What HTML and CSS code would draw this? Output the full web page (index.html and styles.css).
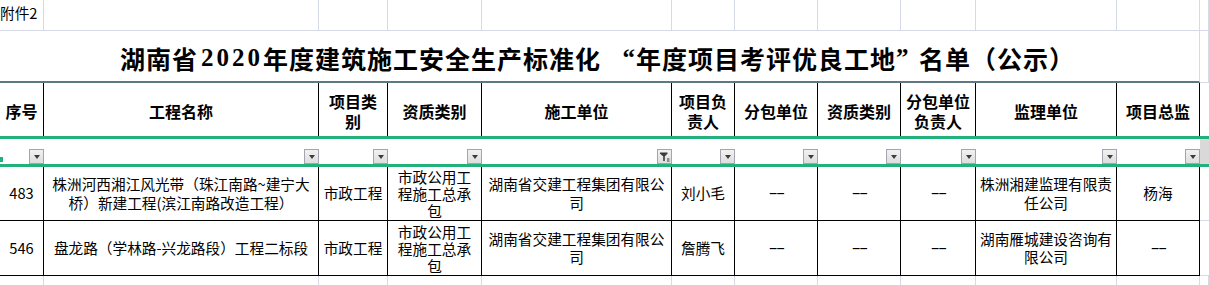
FILE: index.html
```html
<!DOCTYPE html>
<html lang="zh-CN">
<head>
<meta charset="utf-8">
<title>名单（公示）</title>
<link rel="stylesheet" href="styles.css">
</head>
<body>
<div class="sheet">
  <div class="row r-top">
    <div class="c attach">附件2</div>
    <div class="c"></div><div class="c"></div><div class="c"></div><div class="c"></div><div class="c"></div>
    <div class="c"></div><div class="c"></div><div class="c"></div><div class="c"></div><div class="c"></div><div class="c"></div>
  </div>
  <div class="row r-title">
    <div class="c title">湖南省<span class="num">2020</span>年度建筑施工安全生产标准化<span class="sp"></span><span class="ql">“</span>年度项目考评优良工地<span class="qr">”</span>名单（公示）</div>
    <div class="c"></div>
  </div>
  <div class="row r-head">
    <div class="c">序号</div>
    <div class="c">工程名称</div>
    <div class="c">项目类<br>别</div>
    <div class="c">资质类别</div>
    <div class="c">施工单位</div>
    <div class="c">项目负<br>责人</div>
    <div class="c">分包单位</div>
    <div class="c">资质类别</div>
    <div class="c">分包单位<br>负责人</div>
    <div class="c">监理单位</div>
    <div class="c">项目总监</div>
    <div class="c end"></div>
  </div>
  <div class="row r-filter">
    <div class="c"><span class="fb dd"></span></div>
    <div class="c"><span class="fb dd"></span></div>
    <div class="c"><span class="fb dd"></span></div>
    <div class="c"><span class="fb dd"></span></div>
    <div class="c"><span class="fb"><svg width="13" height="13" viewBox="0 0 13 13"><path d="M2 2.5h7.5v1.2L6.8 6.2V11H5.2V6.2L2 3.7z" fill="#3a3a3a"/><rect x="9" y="8.5" width="2.5" height="1" fill="#3a3a3a"/><rect x="9" y="10.5" width="2.5" height="1" fill="#3a3a3a"/></svg></span></div>
    <div class="c"><span class="fb dd"></span></div>
    <div class="c"><span class="fb dd"></span></div>
    <div class="c"><span class="fb dd"></span></div>
    <div class="c"><span class="fb dd"></span></div>
    <div class="c"><span class="fb dd"></span></div>
    <div class="c"><span class="fb dd"></span></div>
    <div class="c end"></div>
  </div>
  <div class="row r-data r1">
    <div class="c">483</div>
    <div class="c">株洲河西湘江风光带（珠江南路~建宁大<br>桥）新建工程(滨江南路改造工程）</div>
    <div class="c">市政工程</div>
    <div class="c three">市政公用工<br>程施工总承<br>包</div>
    <div class="c">湖南省交建工程集团有限公<br>司</div>
    <div class="c">刘小毛</div>
    <div class="c"><span class="dash">--</span></div>
    <div class="c"><span class="dash">--</span></div>
    <div class="c"><span class="dash">--</span></div>
    <div class="c">株洲湘建监理有限责<br>任公司</div>
    <div class="c">杨海</div>
    <div class="c end"></div>
  </div>
  <div class="row r-data r2">
    <div class="c">546</div>
    <div class="c">盘龙路（学林路-兴龙路段）工程二标段</div>
    <div class="c">市政工程</div>
    <div class="c three">市政公用工<br>程施工总承<br>包</div>
    <div class="c">湖南省交建工程集团有限公<br>司</div>
    <div class="c">詹腾飞</div>
    <div class="c"><span class="dash">--</span></div>
    <div class="c"><span class="dash">--</span></div>
    <div class="c"><span class="dash">--</span></div>
    <div class="c">湖南雁城建设咨询有<br>限公司</div>
    <div class="c"><span class="dash">--</span></div>
    <div class="c end"></div>
  </div>
  <div class="row r-empty">
    <div class="c"></div><div class="c"></div><div class="c"></div><div class="c"></div><div class="c"></div><div class="c"></div>
    <div class="c"></div><div class="c"></div><div class="c"></div><div class="c"></div><div class="c"></div><div class="c"></div>
  </div>
  <span class="handle"></span>
</div>
</body>
</html>
```
FILE: styles.css
```css
html, body {
  margin: 0;
  padding: 0;
  background: #ffffff;
}
body {
  font-family: "Noto Sans CJK SC", "Liberation Sans", sans-serif;
  color: #000;
}
.sheet {
  position: relative;
  width: 1209px;
  height: 285px;
  overflow: hidden;
}
.row {
  display: grid;
  grid-template-columns: 44px 275px 69px 94px 190px 63px 83px 83px 75px 141px 83px 9px;
}
.c {
  box-sizing: border-box;
  min-width: 0;
  overflow: hidden;
}

/* row 1: attachment label */
.r-top { height: 31px; }
.r-top .c {
  border-right: 1px solid #d5dae6;
  border-bottom: 1px solid #d5dae6;
}
.attach {
  font-size: 14.67px;
  line-height: 26px;
  white-space: nowrap;
  overflow: visible;
}

/* row 2: title */
.r-title {
  height: 52px;
  grid-template-columns: 1200px 9px;
}
.r-title .c {
  border-right: 1px solid #d5dae6;
  border-bottom: 1px solid #d5dae6;
}
.r-title .title {
  border-bottom: 2px solid #5f7784;
  display: flex;
  align-items: center;
  justify-content: center;
  padding: 3px 4px 0 0;
  font-family: "Liberation Serif", "Noto Sans CJK SC", serif;
  font-weight: 700;
  font-size: 25px;
  letter-spacing: 1px;
  white-space: nowrap;
}
.title .num { letter-spacing: 3px; margin-left: 3px; }
.title .sp { display: inline-block; width: 12px; }
.title .ql, .title .qr {
  display: inline-block;
  width: 23px;
  font-family: "Liberation Serif", serif;
}
.title .ql { text-align: right; }
.title .qr { text-align: left; }

/* header row */
.r-head {
  height: 53px;
  border-bottom: 3px solid #22b07b;
}
.r-head .c {
  border-right: 1px solid #000;
  display: flex;
  align-items: center;
  justify-content: center;
  text-align: center;
  font-weight: 700;
  font-size: 16px;
  line-height: 20px;
  padding-top: 2px;
}
.r-head .c.end { border-right: 0; }

/* filter row */
.r-filter {
  height: 25px;
  border-bottom: 3px solid #22b07b;
}
.r-filter .c {
  display: flex;
  justify-content: flex-end;
  align-items: flex-end;
}
.r-filter .c.end { background: #d9d9d9; }
.fb {
  box-sizing: border-box;
  width: 15px;
  height: 15px;
  border: 1px solid #a3a4ae;
  background: linear-gradient(#f1f1f1, #dedede);
  display: flex;
  align-items: center;
  justify-content: center;
}
.fb.dd::after {
  content: "";
  width: 0;
  height: 0;
  border-left: 3px solid transparent;
  border-right: 3px solid transparent;
  border-top: 4px solid #3c3c3c;
}

/* data rows */
.r-data.r1 { height: 54px; }
.r-data.r2 { height: 55px; }
.r-data .c {
  border-right: 1px solid #000;
  border-bottom: 1px solid #000;
  display: flex;
  align-items: center;
  justify-content: center;
  text-align: center;
  font-size: 14.67px;
  line-height: 18.5px;
  white-space: nowrap;
}
.r-data .c.three { line-height: 17px; }
.r-data .c.end {
  border-right: 0;
  border-bottom: 1px solid #d5dae6;
}
.dash {
  display: inline-block;
  font-family: "Liberation Sans", sans-serif;
  letter-spacing: -1px;
  transform: scaleX(1.9);
}

/* empty row */
.r-empty { height: 16px; }
.r-empty .c { border-right: 1px solid #d5dae6; }

/* selection handle at the frozen line */
.handle {
  position: absolute;
  left: 0;
  top: 157px;
  width: 3px;
  height: 5px;
  background: #22b07b;
}
```
